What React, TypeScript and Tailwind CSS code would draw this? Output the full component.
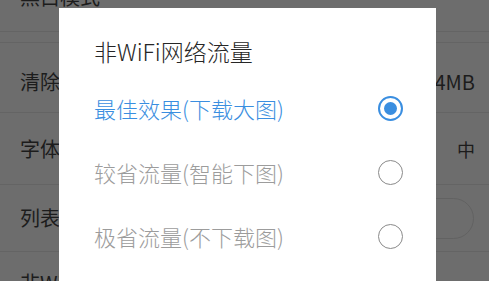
import React, { useState } from 'react';

const FONT = '"Noto Sans CJK SC", "Noto Sans", sans-serif';

type Option = { key: string; label: string };

const OPTIONS: Option[] = [
  { key: 'best', label: '最佳效果(下载大图)' },
  { key: 'save', label: '较省流量(智能下图)' },
  { key: 'min', label: '极省流量(不下载图)' },
];

// 背景设置列表（被遮罩压暗）
const SettingRow: React.FC<{ label: string; value?: React.ReactNode; h: string }> = ({
  label,
  value,
  h,
}) => (
  <div className={`flex items-center justify-between border-b border-[#646464] pl-[20px] pr-[14px] ${h}`}>
    <span className="text-[20px] leading-none text-[#1c1c1c]">{label}</span>
    {value}
  </div>
);

const Radio: React.FC<{ checked: boolean }> = ({ checked }) => (
  <span
    className={`flex h-[25px] w-[25px] items-center justify-center rounded-full ${
      checked ? 'border-2 border-[#3a8ee0]' : 'border-[1.5px] border-[#8a8a8a]'
    }`}
  >
    {checked && <span className="h-[13px] w-[13px] rounded-full bg-[#3a8ee0]" />}
  </span>
);

export default function App() {
  const [selected, setSelected] = useState('best');

  return (
    <div
      className="relative h-[281px] w-[489px] overflow-hidden bg-[#6d6d6d]"
      style={{ fontFamily: FONT }}
    >
      {/* background list */}
      <div className="flex flex-col">
        <div className="h-[32px] overflow-hidden border-b border-[#646464] pl-[20px]">
          <span className="-mt-[13px] block text-[20px] leading-none text-[#1c1c1c]">黑白模式</span>
        </div>
        <div className="h-[11px] border-b border-[#646464]" />
        <SettingRow
          label="清除缓存"
          h="h-[70px] pt-[8px]"
          value={<span className="text-[20px] leading-none text-[#1c1c1c]">12.4MB</span>}
        />
        <SettingRow
          label="字体大小"
          h="h-[72px]"
          value={<span className="text-[18px] leading-none text-[#1c1c1c]">中</span>}
        />
        <SettingRow
          label="列表显示摘要"
          h="h-[67px]"
          value={<span className="mr-[1px] h-[41px] w-[76px] rounded-full border border-[#626262]" />}
        />
        <div className="h-[40px] pl-[20px] pt-[20px]">
          <span className="text-[20px] leading-none text-[#1c1c1c]">非WiFi网络流量</span>
        </div>
      </div>

      {/* dialog overlay */}
      <div className="absolute left-[59px] top-[8px] h-[300px] w-[377px] bg-white">
        <div className="pl-[35px] pt-[28px] text-[23px] font-light leading-[30px] text-[#262626]">
          非WiFi网络流量
        </div>
        <div className="mt-[10px] flex flex-col">
          {OPTIONS.map((o) => {
            const on = selected === o.key;
            return (
              <button
                key={o.key}
                onClick={() => setSelected(o.key)}
                className="flex h-[64px] items-center justify-between pl-[35px] pr-[33px] text-left"
              >
                <span
                  className={`text-[22px] font-light leading-none ${
                    on ? 'text-[#3a8ee0]' : 'text-[#9c9c9c]'
                  }`}
                >
                  {o.label}
                </span>
                <Radio checked={on} />
              </button>
            );
          })}
        </div>
      </div>
    </div>
  );
}
